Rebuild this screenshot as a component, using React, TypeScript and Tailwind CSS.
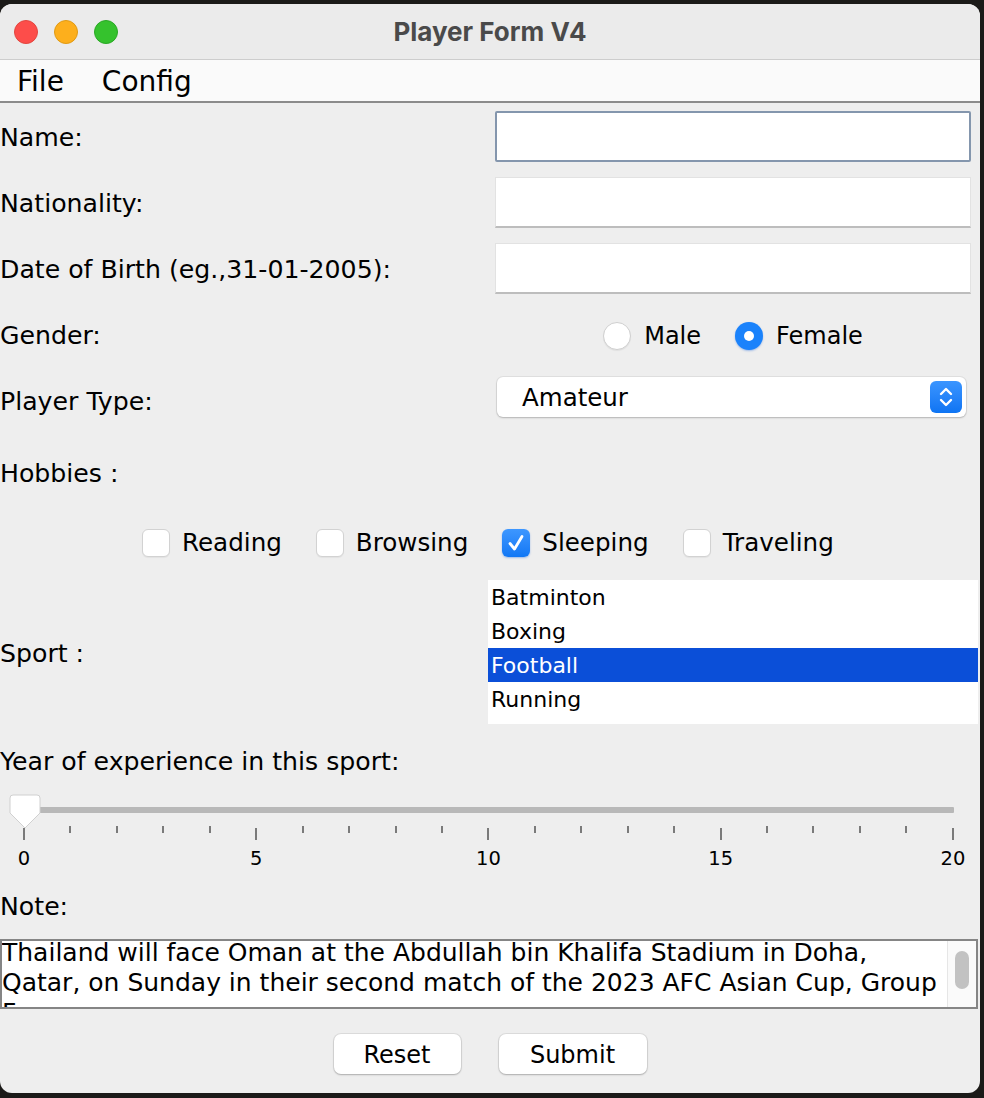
import { useState } from "react";

const font = "font-['DejaVu_Sans',sans-serif]";

const hobbies = [
  { name: "Reading", checked: false },
  { name: "Browsing", checked: false },
  { name: "Sleeping", checked: true },
  { name: "Traveling", checked: false },
];

const sports = ["Batminton", "Boxing", "Football", "Running"];

function TrafficLights() {
  return (
    <div className="flex items-center gap-[16px] pl-[14px]">
      <span className="h-[24px] w-[24px] rounded-full border border-[#e2463f] bg-[#fd4d4a]" />
      <span className="h-[24px] w-[24px] rounded-full border border-[#e09a14] bg-[#fdaf1c]" />
      <span className="h-[24px] w-[24px] rounded-full border border-[#2aa825] bg-[#35c22d]" />
    </div>
  );
}

function Field({ focused }: { focused?: boolean }) {
  return (
    <div
      className={
        focused
          ? "h-[51px] w-[476px] rounded-[2px] border-2 border-[#8496ad] bg-white"
          : "h-[51px] w-[476px] border border-[#e2e2e2] border-b-2 border-b-[#bdbdbd] bg-white"
      }
    />
  );
}

function Radio({ label, checked }: { label: string; checked?: boolean }) {
  return (
    <div className="flex items-center gap-[13px]">
      {checked ? (
        <span className="flex h-[28px] w-[28px] items-center justify-center rounded-full bg-[#1a82fb] shadow-[0_1px_2px_rgba(0,90,220,0.35)]">
          <span className="h-[10px] w-[10px] rounded-full bg-white" />
        </span>
      ) : (
        <span className="h-[28px] w-[28px] rounded-full border border-[#cfcfcf] bg-white shadow-[0_1px_1px_rgba(0,0,0,0.06)]" />
      )}
      <span>{label}</span>
    </div>
  );
}

function Checkbox({ label, checked }: { label: string; checked: boolean }) {
  return (
    <div className="flex items-center gap-[12px]">
      {checked ? (
        <span className="flex h-[28px] w-[28px] items-center justify-center rounded-[6px] bg-gradient-to-b from-[#3d97ff] to-[#0f77f5] shadow-[0_1px_2px_rgba(0,90,220,0.35)]">
          <svg width="20" height="20" viewBox="0 0 20 20" fill="none">
            <path d="M4 10.5 L8.5 16 L16 3.5" stroke="white" strokeWidth="2.8" strokeLinecap="round" strokeLinejoin="round" />
          </svg>
        </span>
      ) : (
        <span className="h-[28px] w-[28px] rounded-[6px] border border-[#d2d2d2] bg-white shadow-[0_1px_1px_rgba(0,0,0,0.05)]" />
      )}
      <span>{label}</span>
    </div>
  );
}

function Slider() {
  const ticks = Array.from({ length: 21 }, (_, i) => i);
  return (
    <div className="relative h-[83px]">
      <div className="pt-[16px]">
        <div className="ml-[22px] h-[6px] w-[932px] rounded-[1px] bg-[#b8b8b8]" />
      </div>
      <div className="mt-[13px] ml-[23px] flex h-[14px] w-[931px] items-start justify-between">
        {ticks.map((t) => (
          <span
            key={t}
            className={t % 5 === 0 ? "mt-[2px] h-[12px] w-[2px] bg-[#7a7a7a]" : "h-[7px] w-[2px] bg-[#7a7a7a]"}
          />
        ))}
      </div>
      <div className="mt-[8px] ml-[4px] flex w-[969px] justify-between text-[19.5px] leading-[22px]">
        {[0, 5, 10, 15, 20].map((n) => (
          <span key={n} className="w-[40px] text-center">
            {n}
          </span>
        ))}
      </div>
      <svg className="absolute left-[9px] top-[3px]" width="32" height="36" viewBox="0 0 32 36">
        <path
          d="M4 1 H28 Q31 1 31 4 V19 L16 34 L1 19 V4 Q1 1 4 1 Z"
          fill="white"
          stroke="#d0d0d0"
          strokeWidth="1"
        />
      </svg>
    </div>
  );
}

export default function App() {
  const [selected] = useState("Football");

  return (
    <div className={`h-[1098px] w-[984px] bg-[#1b1a18] pt-[4px] ${font} text-black`}>
      <div className="h-[1089px] w-[980px] overflow-hidden rounded-[12px] bg-[#eeeeee]">
        {/* Title bar */}
        <div className="grid h-[56px] grid-cols-[1fr_auto_1fr] items-center border-b border-[#cdcdcd] bg-[#ebebeb]">
          <TrafficLights />
          <div className="font-['Inter',sans-serif] text-[26px] font-bold text-[#4a4a4a]">Player Form V4</div>
          <div />
        </div>

        {/* Menu bar */}
        <div className="flex h-[43px] items-center gap-[38px] border-b-2 border-[#8b8b8b] bg-[#fafafa] pl-[17px] pt-[3px] text-[28px]">
          <span>File</span>
          <span>Config</span>
        </div>

        {/* Form */}
        <div className="text-[25.2px]">
          <div className="grid h-[66px] grid-cols-[495px_476px] items-center">
            <span className="pt-[3px]">Name:</span>
            <Field focused />
          </div>
          <div className="grid h-[66px] grid-cols-[495px_476px] items-center">
            <span className="pt-[3px]">Nationality:</span>
            <Field />
          </div>
          <div className="grid h-[66px] grid-cols-[495px_476px] items-center">
            <span className="pt-[3px]">Date of Birth (eg.,31-01-2005):</span>
            <Field />
          </div>
          <div className="grid h-[66px] grid-cols-[495px_476px] items-center">
            <span className="pt-[3px]">Gender:</span>
            <div className="flex justify-center gap-[34px] pt-[3px] text-[24px]">
              <Radio label="Male" />
              <Radio label="Female" checked />
            </div>
          </div>
          <div className="grid h-[66px] grid-cols-[497px_469px] items-center">
            <span className="pt-[3px]">Player Type:</span>
            <div className="-mt-[6px] flex h-[40px] items-center justify-between rounded-[6px] bg-white pl-[25px] pr-[4px] text-[24.5px] shadow-[0_0_0_1px_rgba(0,0,0,0.06),0_1px_2px_rgba(0,0,0,0.2)]">
              <span className="pt-[2px]">Amateur</span>
              <span className="flex h-[32px] w-[32px] items-center justify-center rounded-[6px] bg-gradient-to-b from-[#3a95ff] to-[#0d74f3]">
                <svg width="16" height="24" viewBox="0 0 16 24" fill="none">
                  <path d="M3 9 L8 4 L13 9" stroke="white" strokeWidth="2.4" strokeLinecap="round" strokeLinejoin="round" />
                  <path d="M3 15 L8 20 L13 15" stroke="white" strokeWidth="2.4" strokeLinecap="round" strokeLinejoin="round" />
                </svg>
              </span>
            </div>
          </div>

          <div className="flex h-[78px] items-center">
            <span className="pt-[3px]">Hobbies :</span>
          </div>
          <div className="flex h-[62px] items-center gap-[34px] pl-[142px] pt-[2px] text-[24.6px]">
            {hobbies.map((h) => (
              <Checkbox key={h.name} label={h.name} checked={h.checked} />
            ))}
          </div>

          <div className="grid h-[156px] grid-cols-[488px_490px] items-center">
            <span className="pt-[6px]">Sport :</span>
            <div className="mt-[1px] h-[144px] bg-white text-[22px]">
              {sports.map((s) => (
                <div
                  key={s}
                  className={
                    s === selected
                      ? "flex h-[34px] items-center bg-[#0b4fd8] pl-[3px] pt-[2px] text-white"
                      : "flex h-[34px] items-center pl-[3px] pt-[2px]"
                  }
                >
                  {s}
                </div>
              ))}
            </div>
          </div>

          <div className="flex h-[62px] items-center">
            <span className="pt-[3px]">Year of experience in this sport:</span>
          </div>
          <Slider />
          <div className="flex h-[62px] items-center">
            <span className="pt-[3px]">Note:</span>
          </div>

          {/* Note area, scrolled a little */}
          <div className="mt-[3px] flex h-[70px] w-[978px] overflow-hidden border-2 border-[#858585] bg-white">
            <div className="flex-1 overflow-hidden text-[25px] leading-[30px]">
              <div className="-mt-[3px]">
                <div className="whitespace-nowrap">Thailand will face Oman at the Abdullah bin Khalifa Stadium in Doha,</div>
                <div className="whitespace-nowrap">Qatar, on Sunday in their second match of the 2023 AFC Asian Cup, Group</div>
                <div className="whitespace-nowrap">F.</div>
              </div>
            </div>
            <div className="w-[29px] border-l border-[#e6e6e6] bg-[#fafafa] pl-[7px] pt-[10px]">
              <div className="h-[38px] w-[14px] rounded-full bg-[#c2c2c2]" />
            </div>
          </div>

          {/* Buttons */}
          <div className="mt-[25px] flex justify-center gap-[38px] text-[24px]">
            <button className="h-[40px] w-[127px] rounded-[7px] bg-white pt-[2px] shadow-[0_0_0_1px_rgba(0,0,0,0.07),0_1px_2px_rgba(0,0,0,0.22)]">
              Reset
            </button>
            <button className="h-[40px] w-[148px] rounded-[7px] bg-white pt-[2px] shadow-[0_0_0_1px_rgba(0,0,0,0.07),0_1px_2px_rgba(0,0,0,0.22)]">
              Submit
            </button>
          </div>
        </div>
      </div>
    </div>
  );
}
